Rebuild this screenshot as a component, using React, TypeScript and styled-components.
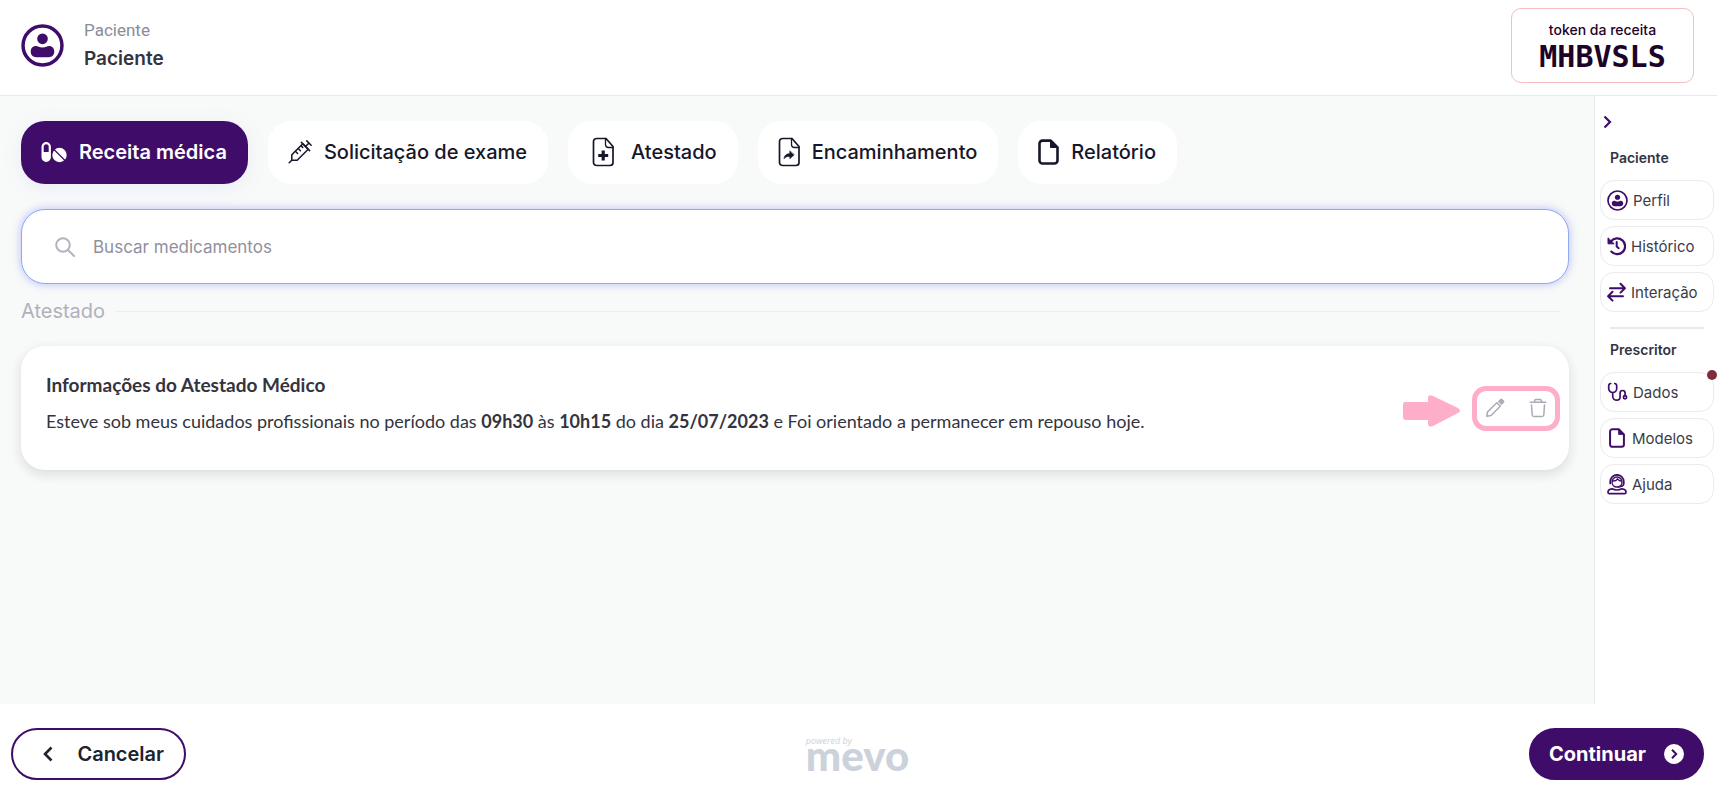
import React from "react";
import styled, { createGlobalStyle, css } from "styled-components";

const purple = "#3f0d69";
const ui = `Inter, "Liberation Sans", sans-serif`;
const reading = `Lato, "Liberation Sans", sans-serif`;

const GlobalStyle = createGlobalStyle`
  *, *::before, *::after { box-sizing: border-box; }
  body { margin: 0; background: #fff; color: #33343f; font-family: ${ui}; }
  h1, h2, h3, p { margin: 0; }
  button, input { font: inherit; color: inherit; }
  button { cursor: pointer; }
  svg { display: block; flex: none; }
`;

const Page = styled.div`
  min-height: 100vh;
  display: flex;
  flex-direction: column;
`;

const Header = styled.header`
  min-height: 96px;
  display: flex;
  justify-content: space-between;
  align-items: flex-start;
  padding: 8px 23px 8px 21px;
  border-bottom: 1px solid #e8eaea;
`;

const Patient = styled.div`
  display: flex;
  align-items: center;
  gap: 20px;
  padding-top: 8px;
  color: ${purple};
`;

const PatientLabel = styled.p`
  font: 400 17px/28px Roboto, sans-serif;
  color: #8a8c98;
`;

const PatientName = styled.h1`
  font-size: 19px;
  line-height: 30px;
  font-weight: 600;
  color: #33343f;
`;

const Token = styled.div`
  width: 183px;
  height: 75px;
  padding-top: 11px;
  border: 1px solid #f9bcc0;
  border-radius: 10px;
  text-align: center;
  color: #1e0329;
  font-size: 14px;
  line-height: 20px;
  font-weight: 500;
`;

const TokenCode = styled.strong`
  display: block;
  font: 700 30px/34px "DejaVu Sans Mono", monospace;
`;

const Body = styled.div`
  flex: 1;
  display: flex;
  background: #f8faf9;
`;

const Main = styled.main`
  flex: 1;
  min-width: 0;
  padding: 25px 25px 25px 21px;
`;

const Tabs = styled.nav`
  display: flex;
  flex-wrap: wrap;
  gap: 20px;
`;

const Tab = styled.button<{ $active?: boolean }>`
  height: 63px;
  display: flex;
  align-items: center;
  gap: 12px;
  padding: 0 21px 2px 20px;
  border: 0;
  border-radius: 24px;
  background: #fff;
  color: #16172b;
  font-size: 20px;
  font-weight: 500;
  ${(p) =>
    p.$active &&
    css`
      background: ${purple};
      color: #fff;
      font-weight: 600;
      box-shadow: 0 4px 20px rgba(110, 110, 240, 0.1);
    `}
`;

const Search = styled.label`
  height: 75px;
  margin-top: 25px;
  display: flex;
  align-items: center;
  gap: 18px;
  padding: 0 33px;
  border: 1px solid #8caaf6;
  border-radius: 24px;
  background: #fff;
  box-shadow: 0 0 10px rgba(85, 95, 235, 0.38);
  color: #b2b4bf;
`;

const SearchInput = styled.input`
  flex: 1;
  min-width: 0;
  border: 0;
  outline: 0;
  padding: 0;
  background: none;
  font-size: 17px;
  color: #33343f;
  &::placeholder { color: #8f909e; opacity: 1; }
`;

const SectionTitle = styled.h2`
  display: flex;
  align-items: center;
  gap: 10px;
  margin-top: 12px;
  padding-right: 9px;
  font-size: 20px;
  line-height: 30px;
  font-weight: 400;
  color: #b0b1bb;
  &::after { content: ""; flex: 1; height: 1px; background: #ebeeed; }
`;

const Card = styled.article`
  min-height: 124px;
  margin-top: 20px;
  display: flex;
  align-items: center;
  gap: 11px;
  padding: 0 9px 0 25px;
  border-radius: 24px;
  background: #fff;
  box-shadow: 0 4px 12px rgba(30, 30, 60, 0.14);
`;

const CardText = styled.div`
  flex: 1;
  min-width: 0;
  margin-top: -8px;
  font-family: ${reading};
`;

const CardTitle = styled.h3`
  font-size: 19px;
  line-height: 34px;
  font-weight: 700;
`;

const CardCopy = styled.p`
  font-size: 18px;
  line-height: 38px;
`;

const Actions = styled.div`
  width: 88px;
  height: 45px;
  display: flex;
  align-items: center;
  justify-content: space-between;
  padding: 0 8px;
  border: 5px solid #ffaec9;
  border-radius: 14px;
  color: #a9abb6;
`;

const IconButton = styled.button`
  padding: 0;
  border: 0;
  background: none;
`;

const Side = styled.aside`
  width: 123px;
  padding: 18px 3px 16px 5px;
  border-left: 1px solid #e8eaea;
  background: #fff;
  color: ${purple};
`;

const SideTitle = styled.h2`
  padding-left: 10px;
  margin-bottom: 11px;
  font-size: 14px;
  line-height: 22px;
  font-weight: 600;
  color: #33343f;
`;

const Collapse = styled(IconButton)`
  display: block;
  padding-left: 2px;
  margin-bottom: 17px;
  color: ${purple};
`;

const SideList = styled.div`
  display: flex;
  flex-direction: column;
  gap: 6px;
`;

const SideButton = styled.button`
  position: relative;
  height: 40px;
  display: flex;
  align-items: center;
  gap: 5px;
  padding: 0 0 0 6px;
  border: 1px solid #ebebee;
  border-radius: 14px;
  background: #fff;
  color: ${purple};
  font-size: 15px;
`;

const SideLabel = styled.span`
  color: #3b3c48;
`;

const Dot = styled.span`
  position: absolute;
  top: -3px;
  right: -4px;
  width: 10px;
  height: 10px;
  border-radius: 50%;
  background: #7d2d3c;
`;

const Divider = styled.hr`
  height: 2px;
  margin: 15px 10px 10px;
  border: 0;
  background: #e8eaea;
`;

const Footer = styled.footer`
  min-height: 96px;
  display: flex;
  align-items: flex-start;
  justify-content: space-between;
  padding: 24px 13px 0 11px;
`;

const FooterButton = styled.button<{ $primary?: boolean }>`
  width: 175px;
  height: 52px;
  display: flex;
  align-items: center;
  justify-content: space-between;
  padding: 0 20px 0 29px;
  border: 2px solid ${purple};
  border-radius: 26px;
  background: #fff;
  color: #20222f;
  font-size: 20px;
  font-weight: 600;
  ${(p) =>
    p.$primary &&
    css`
      padding: 0 18px;
      background: ${purple};
      color: #fff;
      font-weight: 700;
    `}
`;

const Brand = styled.div`
  padding-top: 8px;
  color: #ccd2db;
  font: 900 42px/18px Lato, sans-serif;
`;

const Powered = styled.small`
  display: block;
  font: italic 400 9px/10px "Open Sans", sans-serif;
`;

const stroke = {
  fill: "none",
  stroke: "currentColor",
  strokeLinecap: "round" as const,
  strokeLinejoin: "round" as const,
};

const UserIcon = ({ size, ring = 3.4 }: { size: number; ring?: number }) => (
  <svg width={size} height={size} viewBox="0 0 42 42" aria-hidden>
    <circle cx="21" cy="21" r={20.7 - ring / 2} fill="none" stroke="currentColor" strokeWidth={ring} />
    <circle cx="21" cy="14.5" r="5.2" fill="currentColor" />
    <path fill="currentColor" d="M14.5 21.4c2.200 0 3.200 1.500 6.500 1.500s4.300-1.500 6.500-1.500c3 0 5 2.200 5 5.200 0 4-2.400 5.800-5.400 5.800H14.900c-3 0-5.400-1.800-5.400-5.800 0-3 2-5.200 5-5.200z" />
  </svg>
);

const PillsIcon = () => (
  <svg width="26" height="22" viewBox="0 0 26 22" aria-hidden>
    <path fill="currentColor" fillRule="evenodd" d="M5.200 1A4.700 4.700 0 0 0 .5 5.700v10.600a4.700 4.700 0 0 0 9.400 0V5.700A4.700 4.700 0 0 0 5.200 1zm0 2.200a2.500 2.500 0 0 1 2.500 2.500V11h-5V5.700a2.500 2.500 0 0 1 2.500-2.500z" />
    <circle cx="18.500" cy="14" r="7.200" fill="currentColor" />
    <path d="M12.500 8l12 12" stroke={purple} strokeWidth="1.300" />
  </svg>
);

const SyringeIcon = () => (
  <svg width="24" height="24" viewBox="0 0 24 24" {...stroke} strokeWidth="1.500" aria-hidden>
    <path d="M1.200 22.800l2.600-2.600M3.800 20.200v-5.400l11-11 5.400 5.400-11 11H3.800z" />
    <path d="M13.400 2.400l8.200 8.200M17.500 6.500l3.500-3.500M18.800.9l4.300 4.300M7.400 11.300l2.200 2.200M10.200 8.500l2.200 2.200M13 5.700l1.700 1.700" />
  </svg>
);

const DocIcon = ({ kind }: { kind: "plus" | "share" }) => (
  <svg
    width={kind === "plus" ? 31 : 22}
    height="30"
    viewBox={kind === "plus" ? "-3 0 31 30" : "1 0 22 30"}
    {...stroke}
    strokeWidth="1.700"
    aria-hidden
  >
    <path d="M5.500 1.500H15l7 8v16a3 3 0 0 1-3 3H5.500a3 3 0 0 1-3-3v-21a3 3 0 0 1 3-3z" />
    <path d="M14.500 1.500v6a3 3 0 0 0 3 3H22" strokeWidth="1.300" />
    {kind === "plus" ? (
      <path d="M12.200 13.500v10M7.200 18.500h10" strokeWidth="3.200" strokeLinecap="butt" />
    ) : (
      <path d="M12.800 14.200v2.300c-3.600.3-5.600 2.300-5.900 5.200 1.700-1.900 3.400-2.400 5.900-2.300v2.300l4.200-3.800z" fill="currentColor" strokeWidth=".6" />
    )}
  </svg>
);

const FileIcon = ({ width, height }: { width: number; height: number }) => (
  <svg width={width} height={height} viewBox="0 0 21 26" {...stroke} strokeWidth="2.600" aria-hidden>
    <path d="M4.500 1.600h8.300l6.700 6.700v13.200a3 3 0 0 1-3 3h-12a3 3 0 0 1-3-3V4.600a3 3 0 0 1 3-3z" />
    <path d="M12.500 1.600v6.900h6.900z" fill="currentColor" strokeWidth="1" />
  </svg>
);

const SearchIcon = () => (
  <svg width="20" height="20" viewBox="0 0 20 20" {...stroke} strokeWidth="2" aria-hidden>
    <circle cx="8" cy="8" r="6.800" />
    <path d="M13 13l6 6" />
  </svg>
);

const ArrowMark = () => (
  <svg width="58" height="38" viewBox="0 -6 58 38" aria-hidden>
    <path d="M2 7h23V3q0-4 5-2l25 12q4 3 0 5L30 31q-5 2-5-3v-3H3q-3 0-3-3V9q0-2 2-2z" fill="#ffaec9" />
  </svg>
);

const PencilIcon = () => (
  <svg width="20" height="20" viewBox="0 0 20 20" {...stroke} strokeWidth="1.500" aria-hidden>
    <path d="M1.800 18.200l.7-4.200 9.300-9.300 3.500 3.500-9.300 9.300z" />
    <path d="M13.500 3.300l1.800-1.800q1.200-.8 2.200.1l.9.900q.9 1 .1 2.200l-1.800 1.800z" fill="currentColor" strokeWidth="1" />
  </svg>
);

const TrashIcon = () => (
  <svg width="18" height="20" viewBox="0 0 18 20" {...stroke} strokeWidth="1.500" aria-hidden>
    <path d="M1.300 4.300h15.400M5.500 4V2.800q.2-1.200 1.500-1.300h4q1.300.1 1.500 1.300V4M2.500 7l.7 10q.2 1.500 1.700 1.500h8.200q1.500 0 1.700-1.500l.7-10" />
  </svg>
);

const HistoryIcon = () => (
  <svg width="19" height="20" viewBox="0 0 19 20" {...stroke} strokeWidth="2.200" aria-hidden>
    <path d="M4 5.400a7.900 7.900 0 1 1 .3 10.200" />
    <path d="M9.700 6v4.500l2 1.700" strokeWidth="2" />
    <path d="M1 2.200v5.600h5.800z" fill="currentColor" strokeWidth="1" />
  </svg>
);

const SwapIcon = () => (
  <svg width="19" height="20" viewBox="0 0 19 20" {...stroke} strokeWidth="2" aria-hidden>
    <path d="M3 6.200h14.700M13.500 1.800l4.400 4.400-4.400 4.400M16 14.200H1.300M5.500 9.800l-4.400 4.400 4.400 4.400" />
  </svg>
);

const StethoscopeIcon = () => (
  <svg width="21" height="20" viewBox="0 0 20 20" {...stroke} strokeWidth="1.700" aria-hidden>
    <path d="M3.200 1.500C1.500 1.700 1.200 2.500 1.200 4v2.500a4 4 0 0 0 8 0V4c0-1.500-.3-2.300-2-2.500M5.200 10.800v3.400a4 4 0 0 0 4 4c2.500 0 3.400-1.700 3.400-3.700V11a2.500 2.500 0 0 1 5 0v2.700" />
    <circle cx="17.500" cy="15.300" r="1.600" />
  </svg>
);

const SupportIcon = () => (
  <svg width="20" height="21" viewBox="0 0 20 21" {...stroke} strokeWidth="1.700" aria-hidden>
    <path d="M3.200 9.500V7.600a6.800 6.800 0 0 1 13.600 0v2c0 2.200-2 3.200-5.500 3.200" />
    <path d="M5 8a5 5 0 0 1 10 0c0 3-2.200 5-5 5S5 11 5 8zM5.400 7c3 .2 4.300-.7 5.200-2.200 1 1.500 2 2.200 4 2.200" strokeWidth="1.400" />
    <path d="M5 14.800C2.400 15 1 16.500 1 18.300c0 .9.500 1.400 1.400 1.400h15.200c.9 0 1.400-.5 1.400-1.400 0-1.800-1.400-3.300-4-3.500q-5 2.400-10 0z" />
  </svg>
);

const Chevron = ({ left, dark }: { left?: boolean; dark?: boolean }) => (
  <svg width="11" height="16" viewBox="0 0 11 16" {...stroke} strokeWidth={dark ? 2.6 : 2.2} strokeLinecap="butt" aria-hidden>
    <path d={left ? "M9.500 1.500L3 8l6.500 6.500" : "M2.500 2.500L8 8l-5.500 5.500"} strokeLinejoin="miter" />
  </svg>
);

const NextIcon = () => (
  <svg width="20" height="20" viewBox="0 0 20 20" aria-hidden>
    <circle cx="10" cy="10" r="10" fill="#fff" />
    <path d="M8 5.800l4.200 4.200L8 14.200" fill="none" stroke={purple} strokeWidth="2" />
  </svg>
);

export default function App() {
  return (
    <Page>
      <GlobalStyle />
      <Header>
        <Patient>
          <UserIcon size={43} />
          <div>
            <PatientLabel>Paciente</PatientLabel>
            <PatientName>Paciente</PatientName>
          </div>
        </Patient>
        <Token>
          token da receita
          <TokenCode>MHBVSLS</TokenCode>
        </Token>
      </Header>

      <Body>
        <Main>
          <Tabs>
            <Tab $active><PillsIcon />Receita médica</Tab>
            <Tab><SyringeIcon />Solicitação de exame</Tab>
            <Tab><DocIcon kind="plus" />Atestado</Tab>
            <Tab><DocIcon kind="share" />Encaminhamento</Tab>
            <Tab><FileIcon width={21} height={26} />Relatório</Tab>
          </Tabs>

          <Search>
            <SearchIcon />
            <SearchInput type="text" aria-label="Buscar medicamentos" placeholder="Buscar medicamentos" />
          </Search>

          <SectionTitle>Atestado</SectionTitle>

          <Card>
            <CardText>
              <CardTitle>Informações do Atestado Médico</CardTitle>
              <CardCopy>
                Esteve sob meus cuidados profissionais no período das <b>09h30</b> às <b>10h15</b> do dia{" "}
                <b>25/07/2023</b> e Foi orientado a permanecer em repouso hoje.
              </CardCopy>
            </CardText>
            <ArrowMark />
            <Actions>
              <IconButton type="button" aria-label="Editar"><PencilIcon /></IconButton>
              <IconButton type="button" aria-label="Excluir"><TrashIcon /></IconButton>
            </Actions>
          </Card>
        </Main>

        <Side>
          <Collapse type="button" aria-label="Recolher"><Chevron /></Collapse>
          <SideTitle>Paciente</SideTitle>
          <SideList>
            <SideButton><UserIcon size={21} /><SideLabel>Perfil</SideLabel></SideButton>
            <SideButton><HistoryIcon /><SideLabel>Histórico</SideLabel></SideButton>
            <SideButton><SwapIcon /><SideLabel>Interação</SideLabel></SideButton>
          </SideList>
          <Divider />
          <SideTitle>Prescritor</SideTitle>
          <SideList>
            <SideButton><StethoscopeIcon /><SideLabel>Dados</SideLabel><Dot /></SideButton>
            <SideButton><FileIcon width={20} height={20} /><SideLabel>Modelos</SideLabel></SideButton>
            <SideButton><SupportIcon /><SideLabel>Ajuda</SideLabel></SideButton>
          </SideList>
        </Side>
      </Body>

      <Footer>
        <FooterButton type="button"><Chevron left dark />Cancelar</FooterButton>
        <Brand>
          <Powered>powered by</Powered>
          mevo
        </Brand>
        <FooterButton type="button" $primary>Continuar<NextIcon /></FooterButton>
      </Footer>
    </Page>
  );
}
